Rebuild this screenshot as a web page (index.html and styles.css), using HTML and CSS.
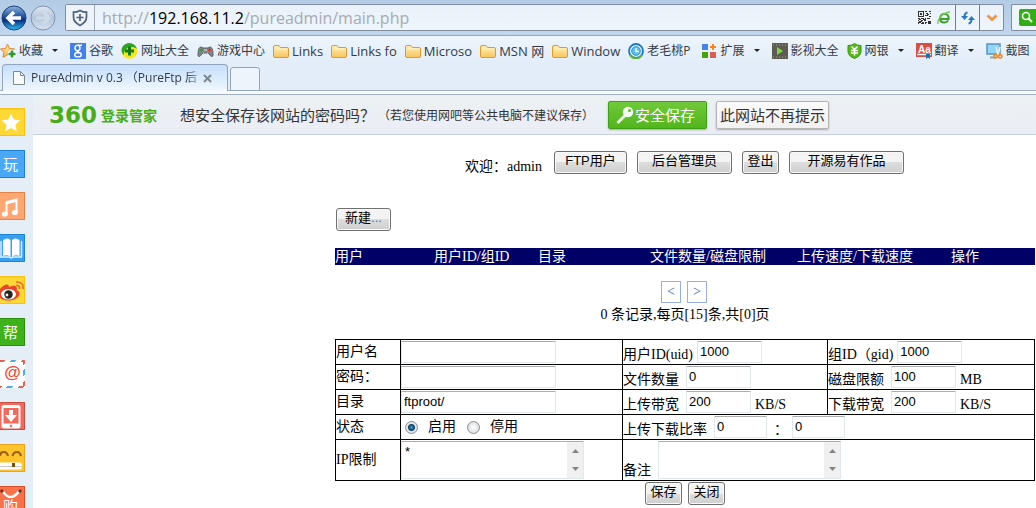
FILE: index.html
```html
<!DOCTYPE html>
<html lang="zh-CN">
<head>
<meta charset="utf-8">
<title>PureAdmin v 0.3</title>
<link rel="stylesheet" href="styles.css">
</head>
<body>
<svg class="defs" width="0" height="0" aria-hidden="true">
  <defs>
    <linearGradient id="gFolder" x1="0" y1="0" x2="0" y2="1"><stop offset="0" stop-color="#fff0b8"/><stop offset="1" stop-color="#f8c55e"/></linearGradient>
    <linearGradient id="gBack" x1="0" y1="0" x2="0" y2="1"><stop offset="0" stop-color="#8fb3df"/><stop offset=".45" stop-color="#1f4f9f"/><stop offset=".6" stop-color="#0a2f80"/><stop offset="1" stop-color="#2cc0f4"/></linearGradient>
    <linearGradient id="gFwd" x1="0" y1="0" x2="0" y2="1"><stop offset="0" stop-color="#dfe8f2"/><stop offset=".5" stop-color="#b3c5da"/><stop offset="1" stop-color="#d5e2ef"/></linearGradient>
    <linearGradient id="gStar" x1="0" y1="0" x2="0" y2="1"><stop offset="0" stop-color="#ffe9b0"/><stop offset="1" stop-color="#f9b248"/></linearGradient>
    <symbol id="folder" viewBox="0 0 16 16"><path d="M.5 4q0-1.500 1.500-1.500h4l1.500 2H14q1.500 0 1.500 1.500v7q0 1.500-1.500 1.500H2Q.5 14.500.5 13z" fill="url(#gFolder)" stroke="#dc9a35"/><path d="M1.500 6h13" stroke="#fff3c9"/></symbol>
  </defs>
</svg>

<header class="chrome">
  <div class="navbar">
    <button class="nav-btn" type="button" aria-label="后退"><svg width="26" height="26" viewBox="0 0 26 26"><circle cx="13" cy="13" r="12" fill="url(#gBack)" stroke="#1c3f7c"/><path d="M20 13H8M13 7l-6 6 6 6" fill="none" stroke="#fff" stroke-width="3.600"/></svg></button>
    <button class="nav-btn" type="button" aria-label="前进"><svg width="26" height="26" viewBox="0 0 26 26"><circle cx="13" cy="13" r="12" fill="url(#gFwd)" stroke="#7e93ae"/><path d="M6 13h12M13 7l6 6-6 6" fill="none" stroke="#cfdbe8" stroke-width="3"/></svg></button>
    <div class="address">
      <span class="shield"><svg width="18" height="18" viewBox="0 0 18 18"><path d="M9 1.500c2 1.300 4 1.700 6.500 1.700V8c0 4-2.500 6.500-6.500 8.500C5 14.500 2.500 12 2.500 8V3.200C5 3.200 7 2.800 9 1.500z" fill="none" stroke="#4e6178" stroke-width="1.700"/><path d="M9 5v7M5.500 8.500h7" stroke="#4e6178" stroke-width="1.700"/></svg></span>
      <div class="url">http://<b>192.168.11.2</b>/pureadmin/main.php</div>
      <svg class="qr" width="13" height="13" viewBox="0 0 13 13" shape-rendering="crispEdges"><g fill="none" stroke="#333"><path d="M.5.5h5v5h-5z"/><path d="M7 .5h2M11 .5h2M8 2.500h2M12 2.500h1M7 4.500h3M11 5.500h2M9 3.500h2M0 7.500h2M3 7.500h3M7 7.500h1M9 7.500h3M1 8.500h2M5 8.500h3M0 9.500h1M3 9.500h2M6 9.500h2M0 11.500h3M4 11.500h2M1 10.500h3M0 12.500h1M3 12.500h3M7 11.500h2M7 12.500h1"/></g><path d="M2 2h2v2H2zM10 10h3v3h-3z" fill="#333"/></svg>
      <svg class="ie" width="14" height="14" viewBox="0 0 14 14"><path d="M3 8h8.500C12 4.500 10 2.800 7.500 2.800S3 4.800 3 7.300s1.800 4.200 4.300 4.200c1.700 0 3-.7 3.900-2" fill="none" stroke="#36a324" stroke-width="2"/><path d="M1 13C0 10 3 3 13 .8" fill="none" stroke="#79cc58" stroke-width="1.400"/></svg>
      <button class="addr-btn" type="button" aria-label="刷新"><svg width="16" height="16" viewBox="0 0 16 16"><path d="M7.500 2.500Q4.500 3 4.500 7" fill="none" stroke="#2677c9" stroke-width="2"/><path d="M1 6h7l-3.500 4z" fill="#2677c9"/><path d="M8.500 13.500q3-.5 3-4.500" fill="none" stroke="#2677c9" stroke-width="2"/><path d="M8 10h7l-3.500-4z" fill="#2677c9"/></svg></button>
      <button class="addr-btn" type="button" aria-label="展开"><svg width="12" height="8" viewBox="0 0 12 8"><path d="M1.500 1.500L6 5.500l4.500-4" fill="none" stroke="#ee964b" stroke-width="3"/></svg></button>
    </div>
    <div class="search"><svg width="17" height="17" viewBox="0 0 17 17"><path d="M0 2q0-2 2-2h15v17H2q-2 0-2-2z" fill="#32ad17"/><circle cx="7" cy="7" r="3.500" fill="none" stroke="#fff" stroke-width="1.500"/><path d="M9.500 9.500l3.500 3.500" stroke="#fff" stroke-width="2"/></svg></div>
  </div>

  <nav class="bookmarks">
    <a class="bm menu" href="#"><svg width="16" height="16" viewBox="0 0 16 16"><path d="M7.500 1l2 4.500 5 .5-3.700 3.300 1 5-4.300-2.500-4.500 2.500 1-5L.5 6l5-.5z" fill="url(#gStar)" stroke="#e0862c"/><path d="M12 7v8M8 11h8" stroke="#fff" stroke-width="5"/><path d="M12 7.500v7M8.500 11h7" stroke="#2e9a2c" stroke-width="2.600"/></svg><span>收藏</span></a>
    <a class="bm" href="#"><svg width="16" height="16" viewBox="0 0 16 16"><path d="M0 0h16v16H0z" fill="#4480ec"/><g fill="none" stroke="#fff" stroke-width="1.400"><ellipse cx="7.500" cy="5" rx="2.500" ry="2.700"/><path d="M8 2.300h4M9 7.500c-3 1-1 1.700.5 2.500"/><ellipse cx="8" cy="11.700" rx="3.300" ry="2.200"/></g></svg><span>谷歌</span></a>
    <a class="bm" href="#"><svg width="17" height="16" viewBox="0 0 17 16"><circle cx="8.500" cy="8" r="7.800" fill="#f6e51c"/><path d="M16 6A8 8 0 0 0 3 2C-1 6 .5 10 3 12c-1-6 7-11 13-6z" fill="#2ba71f"/><path d="M8.500 3.500v9M4 8h9" stroke="#147a1a" stroke-width="3"/></svg><span>网址大全</span></a>
    <a class="bm" href="#"><svg width="17" height="16" viewBox="0 0 17 16"><path d="M1 12c0-5 1-8 3-8l2 1h5l2-1c2 0 3 3 3 8 0 2-2 2-3 0l-2-2H6l-2 2c-1 2-3 2-3 0z" fill="#83878d" stroke="#5b5e64"/><circle cx="4.500" cy="7" r="1.600" fill="#3c9a41"/><circle cx="12.500" cy="7" r="1.600" fill="#d83831"/><path d="M7 7h3M6 10h1M10 10h1" stroke="#e1e3e6"/></svg><span>游戏中心</span></a>
    <a class="bm latin" href="#"><svg width="16" height="16"><use href="#folder"/></svg><span>Links</span></a>
    <a class="bm latin" href="#"><svg width="16" height="16"><use href="#folder"/></svg><span>Links fo</span></a>
    <a class="bm latin" href="#"><svg width="16" height="16"><use href="#folder"/></svg><span>Microso</span></a>
    <a class="bm latin" href="#"><svg width="16" height="16"><use href="#folder"/></svg><span>MSN 网</span></a>
    <a class="bm latin" href="#"><svg width="16" height="16"><use href="#folder"/></svg><span>Window</span></a>
    <a class="bm wide" href="#"><svg width="16" height="16" viewBox="0 0 16 16"><circle cx="8" cy="8" r="7" fill="#d9f1fb" stroke="#1c79c3" stroke-width="1.800"/><path d="M2 12a7 7 0 0 0 12 0" fill="none" stroke="#5fb82f" stroke-width="2"/><circle cx="8" cy="8" r="4.300" fill="#5cc0ea" stroke="#2a93d2"/><path d="M8 5v3.500h3" fill="none" stroke="#fff" stroke-width="1.300"/></svg><span>老毛桃P</span></a>
    <a class="bm menu" href="#"><svg width="15" height="16" viewBox="0 0 15 16"><path d="M0 1h6v6H0z" fill="#4583f3"/><path d="M0 9h6v6H0z" fill="#3ba70b"/><path d="M8 9h6v6H8z" fill="#dd5c4f"/><path d="M11 1v6M8 4h6" stroke="#f6851e" stroke-width="2"/></svg><span>扩展</span></a>
    <a class="bm" href="#"><svg width="16" height="16" viewBox="0 0 16 16"><path d="M0 0h16v16H0z" fill="#5d5b52"/><path d="M1 2h14M1 14h14" stroke="#aaa99e" stroke-dasharray="1 2"/><path d="M5 4l6 4-6 4z" fill="#7ed641"/></svg><span>影视大全</span></a>
    <a class="bm menu" href="#"><svg width="15" height="16" viewBox="0 0 15 16"><path d="M7.500.5c2 1.500 4 2 6.500 2V8c0 4-3 6-6.500 7.500C4 14 1 12 1 8V2.500c2.500 0 4.500-.5 6.500-2z" fill="#58b91b" stroke="#37910d"/><path d="M4.500 3.500l3 3 3-3M4 7.500h7M4 10h7M7.500 6.500v6" fill="none" stroke="#fff" stroke-width="1.500"/></svg><span>网银</span></a>
    <a class="bm menu" href="#"><svg width="16" height="16" viewBox="0 0 16 16"><path d="M0 0h16v14H0z" fill="#de4c42"/><path d="M1 11.500h14" stroke="#fff" stroke-width="1.400"/><path d="M10 11h4v5l-2-1.500L10 16z" fill="#1771b8"/><text class="aa" x="2" y="10">Aa</text></svg><span>翻译</span></a>
    <a class="bm" href="#"><svg width="17" height="16" viewBox="0 0 17 16"><path d="M1 1h13v10H1z" fill="#8fd7fa" stroke="#5e92bd" stroke-width="1.500"/><path d="M4 14.500h6" stroke="#8ea4b8" stroke-width="2"/><path d="M10 4l2 8M14 4l-2 8" stroke="#e6eff6" stroke-width="1.500"/><g fill="none" stroke="#ee8a22" stroke-width="1.600"><circle cx="9.500" cy="13.300" r="1.700"/><circle cx="14.200" cy="13.300" r="1.700"/></g></svg><span>截图</span></a>
  </nav>

  <div class="tabs">
    <div class="tab">
      <svg width="12" height="14" viewBox="0 0 12 14"><path d="M.5.5h7l4 4v9H.5z" fill="#f7faf8" stroke="#7d8c88"/><path d="M7.500.5v4h4" fill="none" stroke="#7d8c88"/></svg>
      <span class="tab-title">PureAdmin v 0.3 （PureFtp 后</span>
      <button class="tab-close" type="button" aria-label="关闭标签"><svg width="9" height="9" viewBox="0 0 9 9"><path d="M1 1l7 7M8 1L1 8" stroke="#808790" stroke-width="2"/></svg></button>
    </div>
    <button class="tab-new" type="button" aria-label="新标签"></button>
  </div>
</header>

<div class="body">
  <aside class="side">
    <a class="tile yellow" href="#" aria-label="收藏"><svg width="25" height="28" viewBox="0 0 25 28"><path d="M11 4.500l2.800 6 6.400.8-4.700 4.500 1.200 6.500-5.700-3.200-5.700 3.200 1.200-6.500L1.800 11.300l6.400-.8z" fill="#fff"/></svg></a>
    <a class="tile blue" href="#">玩</a>
    <a class="tile orange" href="#" aria-label="音乐"><svg width="25" height="28" viewBox="0 0 25 28"><path d="M6.500 21V9l10-2.500V19" fill="none" stroke="#fff" stroke-width="2"/><path d="M6.500 10l10-2.500" stroke="#fff" stroke-width="2.500"/><ellipse cx="4.800" cy="21" rx="3" ry="2.600" fill="#fff"/><ellipse cx="14.800" cy="19.500" rx="3" ry="2.600" fill="#fff"/></svg></a>
    <a class="tile book" href="#" aria-label="阅读"><svg width="25" height="28" viewBox="0 0 25 28"><path d="M1 6v15.500M21.500 6v15.500M0 22h9l2 1 2-1h9" fill="none" stroke="#d9eeff" stroke-width="1.500"/><path d="M3 5q5-3 7.500 0v17q-2.500-3-7.500-1zM19.500 5q-5-3-7.500 0v17q2.500-3 7.500-1z" fill="#fff"/></svg></a>
    <a class="tile yellow" href="#" aria-label="微博"><svg width="25" height="28" viewBox="0 0 25 28"><path d="M0 12c4-5 9-6 9-2 6-3 9 0 7.500 3 4 1.500 4 5 1 7.500C12 25 4 24 0 21z" fill="#e9452b"/><ellipse cx="8.500" cy="17.200" rx="7.500" ry="5.200" fill="#fff"/><circle cx="8.500" cy="17.500" r="4.200" fill="#29211e"/><circle cx="7" cy="18" r="1.400" fill="#fff"/><path d="M16 8.500q4-.5 3.500 3.500M16 5q8-.5 7 7" fill="none" stroke="#ef6331" stroke-width="1.600"/></svg></a>
    <a class="tile green" href="#">帮</a>
    <a class="tile mail" href="#">@</a>
    <a class="tile red" href="#" aria-label="手机"><svg width="25" height="28" viewBox="0 0 25 28"><rect x="1.500" y="2" width="19" height="23.500" rx="2.500" fill="#fff"/><path d="M3.500 5h15v15.500h-15z" fill="#f4695c"/><path d="M9 7h4v5h4l-6 7-6-7h4z" fill="#fff"/><circle cx="11" cy="23" r="1.300" fill="#f4695c"/></svg></a>
    <a class="tile grin" href="#" aria-label="笑话"><svg width="25" height="28" viewBox="0 0 25 28"><path d="M0 11q0-4 4-4 3 0 4 4M12.500 11q1-4 4.500-4 3 0 4 4" fill="none" stroke="#9a6210" stroke-width="2.200"/><rect x="-3" y="17.500" width="25" height="7" rx="3" fill="#fff"/><path d="M0 21.500h22" stroke="#c6c6c6"/><path d="M12 18h3v4h-3z" fill="#7d4d0c"/></svg></a>
    <a class="tile shop" href="#"><svg width="25" height="11" viewBox="0 0 25 11"><path d="M2 3q8 14 18 0" fill="none" stroke="#fff" stroke-width="2.500"/><circle cx="2" cy="4" r="1.800" fill="#7b2c1c"/><circle cx="20" cy="4" r="1.800" fill="#7b2c1c"/></svg>购</a>
  </aside>

  <div class="page">
    <div class="savebar">
      <span class="logo-num">360</span><span class="logo-name">登录管家</span>
      <span class="ask">想安全保存该网站的密码吗？</span>
      <span class="hint">（若您使用网吧等公共电脑不建议保存）</span>
      <button class="save" type="button"><svg width="18" height="18" viewBox="0 0 18 18"><path d="M10 8.500L1.500 17" stroke="#e9f4e2" stroke-width="3"/><circle cx="12" cy="6" r="5.200" fill="#f5faf2"/><circle cx="13.500" cy="4.500" r="1.500" fill="#5cbb27"/></svg>安全保存</button>
      <button class="never" type="button">此网站不再提示</button>
    </div>

    <main class="content">
      <div class="welcome">
        <span class="hello">欢迎：admin</span>
        <button class="btn w73" type="button">FTP用户</button>
        <button class="btn w95" type="button">后台管理员</button>
        <button class="btn" type="button">登出</button>
        <button class="btn w115" type="button">开源易有作品</button>
      </div>

      <button class="btn w55" type="button">新建<span class="dots">...</span></button>

      <table class="list">
        <colgroup><col class="l1"><col class="l2"><col class="l3"><col class="l4"><col class="l5"><col></colgroup>
        <tr><th>用户</th><th>用户ID/组ID</th><th>目录</th><th>文件数量/磁盘限制</th><th>上传速度/下载速度</th><th>操作</th></tr>
      </table>

      <div class="pager"><a href="#">&lt;</a><a href="#">&gt;</a></div>
      <p class="count">0 条记录,每页[15]条,共[0]页</p>

      <form>
        <table class="form">
          <colgroup><col class="f1"><col class="f2"><col class="f3"><col></colgroup>
          <tr>
            <td><label for="name">用户名</label></td>
            <td><input class="long" id="name" type="text"></td>
            <td><div class="field"><label for="uid">用户ID(uid)</label><input class="num" id="uid" type="text" value="1000"></div></td>
            <td><div class="field"><label for="gid">组ID（gid)</label><input class="num" id="gid" type="text" value="1000"></div></td>
          </tr>
          <tr>
            <td><label for="pwd">密码：</label></td>
            <td><input class="long" id="pwd" type="password"></td>
            <td><div class="field wide"><label for="files">文件数量</label><input class="num" id="files" type="text" value="0"></div></td>
            <td><div class="field wide"><label for="quota">磁盘限额</label><input class="num" id="quota" type="text" value="100"><span class="unit">MB</span></div></td>
          </tr>
          <tr>
            <td><label for="dir">目录</label></td>
            <td><input class="long" id="dir" type="text" value="ftproot/"></td>
            <td><div class="field wide"><label for="up">上传带宽</label><input class="num" id="up" type="text" value="200"><span class="unit">KB/S</span></div></td>
            <td><div class="field wide"><label for="down">下载带宽</label><input class="num" id="down" type="text" value="200"><span class="unit">KB/S</span></div></td>
          </tr>
          <tr>
            <td>状态</td>
            <td><div class="radios"><label><input type="radio" name="st" checked>启用</label><label><input type="radio" name="st">停用</label></div></td>
            <td colspan="2"><div class="field wide"><label for="r1">上传下载比率</label><input class="ratio" id="r1" type="text" value="0"><span class="colon">：</span><input class="ratio" type="text" value="0" aria-label="下载比率"></div></td>
          </tr>
          <tr>
            <td><label for="ip">IP限制</label></td>
            <td><div class="area"><textarea id="ip">*</textarea><span class="rail"><svg width="7" height="4" viewBox="0 0 7 4"><path d="M0 4l3.500-4L7 4z" fill="#858585"/></svg><svg width="7" height="4" viewBox="0 0 7 4"><path d="M0 0h7L3.500 4z" fill="#858585"/></svg></span></div></td>
            <td colspan="2"><div class="field wide"><label for="note">备注</label><div class="area"><textarea id="note"></textarea><span class="rail"><svg width="7" height="4" viewBox="0 0 7 4"><path d="M0 4l3.500-4L7 4z" fill="#858585"/></svg><svg width="7" height="4" viewBox="0 0 7 4"><path d="M0 0h7L3.500 4z" fill="#858585"/></svg></span></div></div></td>
          </tr>
        </table>
        <div class="actions"><button class="btn" type="button">保存</button><button class="btn" type="button">关闭</button></div>
      </form>
    </main>
  </div>
</div>
</body>
</html>
```
FILE: styles.css
```css
* { box-sizing: border-box; }
body {
  margin: 0;
  min-height: 100vh;
  display: flex;
  flex-direction: column;
  overflow: hidden;
  background: #fff;
  color: #000;
  font: 14px/18px "Liberation Serif", "Noto Sans CJK SC", serif;
}
a { color: inherit; text-decoration: none; }
button { font: inherit; padding: 0; border: 0; background: none; color: inherit; white-space: nowrap; }
svg { display: block; flex: none; }
.defs { position: absolute; }

/* browser chrome */
.chrome {
  font: 12px/16px "Open Sans", "Noto Sans CJK SC", sans-serif;
  color: #333b45;
  background: #e2edf9;
  border-bottom: 1px solid #a0aec2;
}
.navbar {
  display: flex;
  align-items: center;
  height: 36px;
  padding-left: 1px;
  background: linear-gradient(#b3cbe5, #c2d6ee);
  border-bottom: 1px solid #93a8c3;
}
.nav-btn { width: 26px; margin-right: 3px; }
.address {
  flex: 1;
  display: flex;
  align-items: center;
  height: 27px;
  margin-left: 6px;
  background: linear-gradient(#e9f1fa, #eff5fc);
  border: 1px solid #818d9d;
  border-radius: 2px;
}
.shield { display: flex; align-items: center; justify-content: center; width: 29px; height: 100%; border-right: 1px solid #9ba9ba; background: #eef3f9; }
.url { flex: 1; padding-left: 7px; font-size: 16px; color: #a6abb2; }
.url b { font-weight: 400; color: #000; }
.qr { margin-right: 6px; }
.ie { margin-right: 4px; }
.addr-btn { display: flex; align-items: center; justify-content: center; width: 24px; height: 100%; border-left: 1px solid #737e8d; }
.search {
  display: flex;
  align-items: center;
  justify-content: flex-end;
  width: 25px;
  height: 27px;
  margin-left: 7px;
  background: #eef4fb;
  border: 1px solid #818d9d;
  border-right: 0;
  border-radius: 2px 0 0 2px;
}
.bookmarks {
  display: flex;
  align-items: center;
  gap: 8px;
  height: 28px;
  padding-top: 1px;
  background: linear-gradient(#edf4fc, #e2edf9);
  white-space: nowrap;
}
.bm { display: flex; align-items: center; gap: 3px; }
.bm.latin { font-size: 13px; }
.bm.wide { margin-right: 4px; }
.bm.menu::after {
  content: "";
  margin: 0 4px 0 6px;
  border: 3px solid transparent;
  border-top-color: #222;
  border-bottom: 0;
}
.aa { font: bold 10px "Liberation Sans", sans-serif; fill: #fff; }
.tabs {
  display: flex;
  align-items: flex-end;
  gap: 2px;
  height: 30px;
  padding: 0 2px 3px;
  background: linear-gradient(#e2edf9 26px, #a0aec2 26px, #a0aec2 27px, #f8fbfe 27px);
}
.tab {
  display: flex;
  align-items: center;
  justify-content: flex-start;
  width: 226px;
  height: 27px;
  padding: 0 10px;
  border: 1px solid #92a5be;
  border-bottom: 0;
  border-radius: 4px 4px 0 0;
  background: linear-gradient(#c4dffc, #f0f7fe);
}
.tab-title {
  width: 170px;
  margin: 0 2px 0 6px;
  white-space: nowrap;
  -webkit-mask-image: linear-gradient(to right, #000 155px, transparent 175px);
  mask-image: linear-gradient(to right, #000 155px, transparent 175px);
}
.tab-new { width: 30px; height: 24px; border: 1px solid #92a5be; border-radius: 3px 3px 0 0; background: #edf4fc; }

/* side strip */
.body { flex: 1; display: flex; height: 0; }
.side {
  flex: none;
  display: flex;
  flex-direction: column;
  gap: 14px;
  width: 33px;
  padding-top: 13px;
  background: #e5edf7;
  overflow: hidden;
}
.tile {
  flex: none;
  width: 25px;
  height: 28px;
  border: 1px solid;
  border-left: 0;
  border-radius: 0 1px 1px 0;
  color: #fff;
  font: 15px/26px "Noto Sans CJK SC", sans-serif;
  text-align: center;
  padding-right: 3px;
  overflow: hidden;
}
.yellow { background: #ffd836; border-color: #ffc012; }
.blue { background: #48a7f7; border-color: #1b7fd8; }
.orange { background: #ffa673; border-color: #e38347; }
.book { background: #37a0f0; border-color: #1b84d8; }
.green { background: #3fb11a; border-color: #2b920c; }
.mail {
  border: 0;
  padding: 3px;
  color: #ee4e38;
  font: bold 17px/20px "Liberation Sans", sans-serif;
  background: linear-gradient(#fff, #fff) 0 2px / 23px 24px no-repeat,
    repeating-linear-gradient(135deg, #e8604d 0 4px, #fff 4px 8px, #55a9e8 8px 12px, #fff 12px 16px);
}
.red { background: #f4695c; border-color: #c44e42; }
.grin { background: #ffc42c; border-color: #eda41d; }
.shop { background: #fb7149; border-color: #d7502b; line-height: 16px; }

/* password bar */
.page { flex: 1; min-width: 0; }
.savebar {
  display: flex;
  align-items: center;
  height: 40px;
  padding-left: 16px;
  border-bottom: 1px solid #c6cfe6;
  background: linear-gradient(#ecf1f2, #ebedf6);
  color: #333;
  font: 15px/20px "Noto Sans CJK SC", sans-serif;
  white-space: nowrap;
}
.logo-num { width: 52px; font: bold 23px/20px "DejaVu Sans", sans-serif; color: #47ae17; }
.logo-name { width: 79px; font-size: 14px; font-weight: 700; color: #47ae17; }
.ask { width: 198px; }
.hint { width: 230px; font-size: 12px; }
.save, .never { height: 28px; border-radius: 2px; line-height: 26px; box-shadow: 0 1px 2px #aaa; }
.save {
  display: flex;
  align-items: center;
  justify-content: center;
  width: 99px;
  gap: 1px;
  padding-right: 4px;
  border: 1px solid #3f9f16;
  background: linear-gradient(#70c93a, #53b51c);
  color: #fff;
}
.never { width: 113px; margin-left: 9px; border: 1px solid #b4b4b4; background: linear-gradient(#fafafa, #f1f1f1); }

/* admin page */
.content { padding: 16px 1px 0 302px; }
.btn {
  width: 37px;
  height: 23px;
  padding-bottom: 4px;
  border: 1px solid #707070;
  border-radius: 3px;
  background: linear-gradient(#f3f3f3 50%, #dddddd 50%, #cfcfcf);
  box-shadow: inset 0 0 0 1px #f9f9f9;
  font: 13px/16px "Liberation Sans", "Noto Sans CJK SC", sans-serif;
}
.w55 { width: 55px; margin-left: 1px; }
.w73 { width: 73px; }
.w95 { width: 95px; }
.w115 { width: 115px; }
.dots { color: #2f73c0; }
.welcome { display: flex; align-items: flex-end; justify-content: center; gap: 10px; margin-bottom: 34px; padding-right: 1px; }
.hello { margin-right: 2px; line-height: 14px; }
.list { width: 100%; margin-top: 17px; border-spacing: 0; table-layout: fixed; background: #000066; color: #fff; }
.list th { padding: 0; font-weight: 400; text-align: left; line-height: 17px; white-space: nowrap; }
.l1 { width: 99px; }
.l2 { width: 104px; }
.l3 { width: 112px; }
.l4 { width: 147px; }
.l5 { width: 154px; }
.pager { display: flex; justify-content: center; gap: 6px; margin-top: 16px; padding-right: 2px; }
.pager a { width: 20px; height: 22px; border: 1px solid #9aaee6; color: #2e6ab1; line-height: 20px; text-align: center; }
.count { margin: 3px 0 15px; text-align: center; }
.form { width: 100%; border-collapse: collapse; table-layout: fixed; }
.form td { height: 25px; padding: 1px 0; border: 1px solid #000; white-space: nowrap; }
.f1 { width: 65px; }
.f2 { width: 222px; }
.f3 { width: 205px; }
.field { display: flex; align-items: flex-end; gap: 4px; }
.field.wide { gap: 7px; }
.field label, .unit { line-height: 16px; }
.form input[type="text"], .form input[type="password"], .area {
  display: block;
  height: 22px;
  margin: 0;
  padding: 0 2px 1px;
  border: 1px solid #e2e6ee;
  border-top-color: #abadb3;
  border-radius: 1px;
  background: #fff;
  font: 13px/16px "Liberation Sans", "Noto Sans CJK SC", sans-serif;
}
.form .long { width: 155px; }
.form .num { width: 65px; }
.form .ratio { width: 53px; }
.unit { margin-left: -3px; }
.colon { width: 11px; line-height: 16px; }
.form .area { display: flex; width: 183px; height: 38px; padding: 0; }
.area textarea {
  flex: 1;
  min-width: 0;
  margin: 0;
  padding: 2px 3px;
  border: 0;
  background: none;
  font: inherit;
  resize: none;
  overflow: hidden;
}
.rail {
  display: flex;
  flex-direction: column;
  align-items: center;
  justify-content: space-between;
  width: 16px;
  padding: 7px 0;
  background: #f0f0f0;
}
.radios { display: flex; gap: 11px; padding-left: 4px; }
.radios label { display: flex; align-items: center; gap: 10px; }
.radios input {
  appearance: none;
  width: 13px;
  height: 13px;
  margin: 0;
  border: 1px solid #8e8f8f;
  border-radius: 50%;
  background: radial-gradient(#fff, #d0d3d6);
}
.radios input:checked { background: radial-gradient(circle, #37a5d8 0, #0d3c66 3px, #e4e7ea 4px); }
.actions { display: flex; justify-content: center; gap: 6px; margin-top: 1px; }
```
